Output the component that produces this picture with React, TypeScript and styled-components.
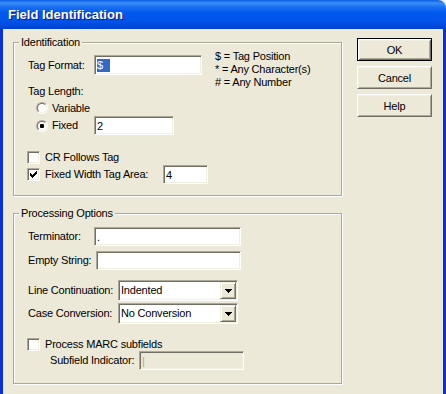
import React from "react";
import styled, { createGlobalStyle } from "styled-components";

const face = "#ECE9D8";
const shadow = "#ACA899";
const darkShadow = "#716F64";
const light = "#F1EFE2";

const GlobalStyle = createGlobalStyle`
  html, body {
    margin: 0;
    padding: 0;
    background: #f1f0ea;
  }
  body {
    font-family: "Liberation Sans", Arial, sans-serif;
    font-size: 11px;
    color: #000;
  }
`;

const Window = styled.div`
  width: 446px;
  height: 394px;
  display: flex;
  flex-direction: column;
  overflow: hidden;
`;

const TitleBar = styled.div`
  flex: none;
  height: 29px;
  display: flex;
  align-items: center;
  padding-left: 8px;
  border-top-right-radius: 8px;
  background: linear-gradient(
    to bottom,
    #0a5de8 0px,
    #3d8ff5 3px,
    #1a6ff2 7px,
    #0058ee 13px,
    #0055eb 20px,
    #004adb 26px,
    #0040c8 29px
  );
  color: #fff;
  font: bold 13px "Liberation Sans", Arial, sans-serif;
  text-shadow: 1px 1px 0 #0a1a7a;
`;

const Client = styled.div`
  flex: 1;
  display: flex;
  align-items: flex-start;
  padding: 7px 0 0 10px;
  background: ${face};
  border-left: 3px solid #0831d9;
  border-right: 3px solid #0831d9;
  letter-spacing: -0.2px;
`;

const Groups = styled.div`
  width: 329px;
  flex: none;
  display: flex;
  flex-direction: column;
  gap: 11px;
`;

const Group = styled.fieldset`
  margin: 0;
  padding: 0;
  min-width: 0;
  border: 1px solid ${shadow};
  box-shadow: inset 1px 1px 0 #fff, 1px 1px 0 #fff;
`;

const Legend = styled.legend`
  margin-left: 5px;
  padding: 0 2px;
  line-height: 13px;
  background: ${face};
`;

const IdentBody = styled.div`
  display: grid;
  grid-template-columns: 174px auto;
  justify-content: start;
  padding: 1px 0 11px 14px;
`;

const ProcBody = styled.div`
  display: flex;
  flex-direction: column;
  padding: 7px 0 13px 14px;
`;

const Row = styled.div<{ $mt?: number; $h?: number; $indent?: number; $span?: boolean }>`
  grid-column: ${(p) => (p.$span ? "1 / -1" : "1")};
  display: flex;
  align-items: center;
  height: ${(p) => p.$h ?? 19}px;
  margin-top: ${(p) => p.$mt ?? 0}px;
  padding-left: ${(p) => p.$indent ?? 0}px;
  white-space: nowrap;
`;

const Label = styled.span<{ $w?: number }>`
  flex: none;
  width: ${(p) => (p.$w ? `${p.$w}px` : "auto")};
  line-height: 13px;
`;

const Caption = styled.div<{ $mt?: number }>`
  grid-column: 1;
  margin-top: ${(p) => p.$mt ?? 0}px;
  line-height: 13px;
`;

const Help = styled.div`
  grid-column: 2;
  grid-row: 1 / span 2;
  margin-left: 13px;
  line-height: 13px;
  white-space: nowrap;
`;

const TextBox = styled.div<{ $w: number; $h?: number; $disabled?: boolean }>`
  box-sizing: border-box;
  flex: none;
  width: ${(p) => p.$w}px;
  height: ${(p) => p.$h ?? 19}px;
  display: flex;
  align-items: center;
  padding: 0 0 0 2px;
  border: 1px solid;
  border-color: ${shadow} #fff #fff ${shadow};
  box-shadow: inset 1px 1px 0 ${darkShadow}, inset -1px -1px 0 ${light};
  background: ${(p) => (p.$disabled ? face : "#fff")};
  color: ${(p) => (p.$disabled ? shadow : "#000")};
  white-space: nowrap;
  overflow: hidden;
`;

const Selected = styled.span`
  background: #316ac5;
  color: #fff;
  line-height: 13px;
  padding-right: 7px;
`;

const Combo = styled.div<{ $w: number }>`
  box-sizing: border-box;
  flex: none;
  width: ${(p) => p.$w}px;
  height: 21px;
  display: flex;
  align-items: center;
  padding: 1px 1px 1px 2px;
  border: 1px solid;
  border-color: ${shadow} #fff #fff ${shadow};
  box-shadow: inset 1px 1px 0 ${darkShadow}, inset -1px -1px 0 ${light};
  background: #fff;
`;

const ComboText = styled.span`
  flex: 1;
  line-height: 13px;
`;

const DropButton = styled.div`
  box-sizing: border-box;
  flex: none;
  width: 16px;
  align-self: stretch;
  display: flex;
  align-items: center;
  justify-content: center;
  background: ${face};
  border: 1px solid;
  border-color: ${light} ${darkShadow} ${darkShadow} ${light};
  box-shadow: inset 1px 1px 0 #fff, inset -1px -1px 0 ${shadow};
`;

const RadioOuter = styled.span`
  box-sizing: border-box;
  flex: none;
  width: 12px;
  height: 12px;
  margin-right: 4px;
  border-radius: 50%;
  border: 1px solid;
  border-color: ${shadow} #fff #fff ${shadow};
  display: flex;
`;

const RadioInner = styled.span`
  box-sizing: border-box;
  flex: 1;
  border-radius: 50%;
  border: 1px solid;
  border-color: ${darkShadow} ${light} ${light} ${darkShadow};
  background: #fff;
  display: flex;
  align-items: center;
  justify-content: center;
`;

const Dot = styled.span`
  width: 4px;
  height: 4px;
  border-radius: 1px;
  background: #000;
`;

const CheckBox = styled.span`
  box-sizing: border-box;
  flex: none;
  width: 13px;
  height: 13px;
  margin: 0 5px 0 -1px;
  border: 1px solid;
  border-color: ${shadow} #fff #fff ${shadow};
  box-shadow: inset 1px 1px 0 ${darkShadow}, inset -1px -1px 0 ${light};
  background: #fff;
  display: flex;
  align-items: center;
  justify-content: center;
`;

const Buttons = styled.div`
  margin-left: 15px;
  padding-top: 2px;
  display: flex;
  flex-direction: column;
  gap: 5px;
`;

const Button = styled.div<{ $default?: boolean }>`
  box-sizing: border-box;
  width: 75px;
  height: 23px;
  display: flex;
  align-items: center;
  justify-content: center;
  background: ${face};
  border: 1px solid;
  border-color: ${(p) => (p.$default ? "#000" : `#fff ${darkShadow} ${darkShadow} #fff`)};
  box-shadow: ${(p) =>
    p.$default
      ? `inset 1px 1px 0 #fff, inset -1px -1px 0 ${darkShadow}, inset 2px 2px 0 ${light}, inset -2px -2px 0 ${shadow}`
      : `inset 1px 1px 0 ${light}, inset -1px -1px 0 ${shadow}`};
`;

const Radio = ({ checked }: { checked?: boolean }) => (
  <RadioOuter>
    <RadioInner>{checked && <Dot />}</RadioInner>
  </RadioOuter>
);

const checkPixels = [
  [6, 0], [5, 1], [6, 1], [0, 2], [4, 2], [5, 2], [6, 2],
  [0, 3], [1, 3], [3, 3], [4, 3], [5, 3], [0, 4], [1, 4], [2, 4], [3, 4], [4, 4],
  [1, 5], [2, 5], [3, 5], [2, 6],
];

const Check = ({ checked }: { checked?: boolean }) => (
  <CheckBox>
    {checked && (
      <svg width="7" height="7" viewBox="0 0 7 7" shapeRendering="crispEdges">
        {checkPixels.map(([x, y]) => (
          <rect key={`${x}-${y}`} x={x} y={y} width="1" height="1" fill="#000" />
        ))}
      </svg>
    )}
  </CheckBox>
);

const Dropdown = ({ value, width }: { value: string; width: number }) => (
  <Combo $w={width}>
    <ComboText>{value}</ComboText>
    <DropButton>
      <svg width="7" height="4" viewBox="0 0 7 4" shapeRendering="crispEdges">
        <rect x="0" y="0" width="7" height="1" fill="#000" />
        <rect x="1" y="1" width="5" height="1" fill="#000" />
        <rect x="2" y="2" width="3" height="1" fill="#000" />
        <rect x="3" y="3" width="1" height="1" fill="#000" />
      </svg>
    </DropButton>
  </Combo>
);

export default function App() {
  return (
    <>
      <GlobalStyle />
      <Window>
        <TitleBar>Field Identification</TitleBar>
        <Client>
          <Groups>
            <Group>
              <Legend>Identification</Legend>
              <IdentBody>
                <Row $mt={5} $h={20}>
                  <Label $w={66}>Tag Format:</Label>
                  <TextBox $w={108} $h={20}>
                    <Selected>$</Selected>
                  </TextBox>
                </Row>
                <Help>
                  $ = Tag Position
                  <br />* = Any Character(s)
                  <br /># = Any Number
                </Help>
                <Caption $mt={10}>Tag Length:</Caption>
                <Row $mt={2} $h={16} $indent={8}>
                  <Radio />
                  <Label>Variable</Label>
                </Row>
                <Row $indent={8}>
                  <Radio checked />
                  <Label $w={42}>Fixed</Label>
                  <TextBox $w={80}>2</TextBox>
                </Row>
                <Row $span $mt={15} $h={14}>
                  <Check />
                  <Label>CR Follows Tag</Label>
                </Row>
                <Row $span $mt={1}>
                  <Check checked />
                  <Label $w={118}>Fixed Width Tag Area:</Label>
                  <TextBox $w={45}>4</TextBox>
                </Row>
              </IdentBody>
            </Group>
            <Group>
              <Legend>Processing Options</Legend>
              <ProcBody>
                <Row>
                  <Label $w={66}>Terminator:</Label>
                  <TextBox $w={147}>.</TextBox>
                </Row>
                <Row $mt={5}>
                  <Label $w={68}>Empty String:</Label>
                  <TextBox $w={145} />
                </Row>
                <Row $mt={10} $h={21}>
                  <Label $w={90}>Line Continuation:</Label>
                  <Dropdown value="Indented" width={120} />
                </Row>
                <Row $mt={2} $h={21}>
                  <Label $w={90}>Case Conversion:</Label>
                  <Dropdown value="No Conversion" width={120} />
                </Row>
                <Row $mt={13} $h={14}>
                  <Check />
                  <Label>Process MARC subfields</Label>
                </Row>
                <Row $indent={22}>
                  <Label $w={89}>Subfield Indicator:</Label>
                  <TextBox $w={105} $disabled>
                    |
                  </TextBox>
                </Row>
              </ProcBody>
            </Group>
          </Groups>
          <Buttons>
            <Button $default>OK</Button>
            <Button>Cancel</Button>
            <Button>Help</Button>
          </Buttons>
        </Client>
      </Window>
    </>
  );
}
